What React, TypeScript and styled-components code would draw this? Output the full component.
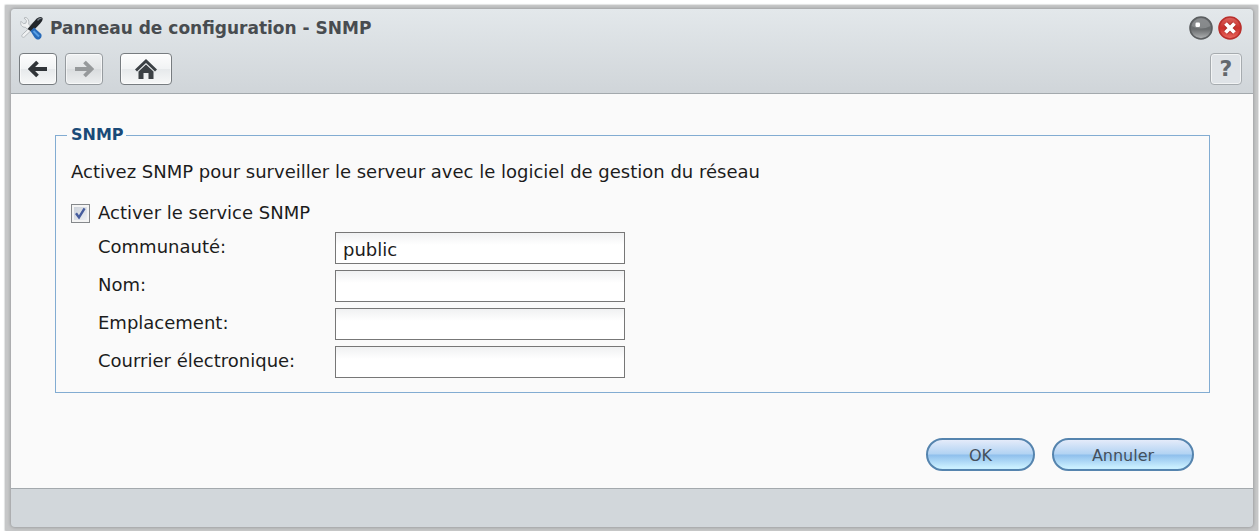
import React from "react";
import styled, { createGlobalStyle } from "styled-components";

const GlobalStyle = createGlobalStyle`
  * { box-sizing: border-box; }
  body {
    margin: 0;
    background: #fff;
    color: #1c1c1c;
    font-family: "DejaVu Sans", Verdana, sans-serif;
    font-size: 18px;
    line-height: 24px;
  }
  button, input { font: inherit; }
`;

const Page = styled.div`
  padding: 5px 1px 0 5px;
`;

const Frame = styled.div`
  padding: 4px 5px 4px 6px;
  border-radius: 1px;
  background: #c6c7c8;
  box-shadow: 0 0 1px 1px #e2e3e3;
`;

const Window = styled.section`
  display: flex;
  flex-direction: column;
  border-radius: 4px;
  background: #d2d7db;
  box-shadow: 0 0 3px 1px #9fa1a3;
`;

const Header = styled.header`
  padding: 5px 11px 8px 8px;
  border-radius: 4px 4px 0 0;
  border-bottom: 1px solid #a3a9ad;
  background: linear-gradient(#e3e8eb, #d0d5d9);
`;

const TitleBar = styled.div`
  display: flex;
  align-items: center;
  height: 28px;
  gap: 7px;
`;

const Title = styled.h1`
  flex: 1;
  margin: 0;
  color: #484c50;
  font-size: 17px;
  font-weight: bold;
  line-height: 24px;
`;

const RoundButton = styled.button`
  display: flex;
  width: 24px;
  height: 24px;
  padding: 0;
  border: 0;
  background: none;
`;

const WindowButtons = styled.div`
  display: flex;
  gap: 5px;
`;

const Toolbar = styled.nav`
  display: flex;
  gap: 8px;
  margin-top: 11px;
`;

const ToolButton = styled.button<{ $wide?: boolean; $soft?: boolean; $end?: boolean }>`
  display: flex;
  align-items: center;
  justify-content: center;
  width: ${(p) => (p.$wide ? 52 : p.$end ? 32 : 38)}px;
  height: 32px;
  margin-left: ${(p) => (p.$end ? "auto" : p.$wide ? "9px" : "0")};
  padding: 0;
  border: 1px solid ${(p) => (p.$end ? "#a6abaf" : p.$soft ? "#969b9f" : "#777c80")};
  border-radius: 4px;
  box-shadow: inset 0 0 0 1px rgba(255, 255, 255, 0.6);
  background: ${(p) =>
    p.$end
      ? "#dfe3e7"
      : p.$soft
        ? "linear-gradient(#f0f2f3, #e2e4e6 50%, #d9dcde 50%, #eceeef)"
        : "linear-gradient(#fdfdfd, #f1f3f4 50%, #e6e9eb 50%, #f7f8f8)"};
  color: #63686c;
  font-size: 22px;
  font-weight: bold;
`;

const Content = styled.main`
  padding: 31px 43px 17px 44px;
  background: #fafafa;
`;

const Group = styled.fieldset`
  min-width: 0;
  margin: 0;
  padding: 0 11px 14px;
  border: 1px solid #82acd2;
`;

const Legend = styled.legend`
  padding: 0 2px 0 4px;
  color: #1a4a78;
  font-size: 16px;
  font-weight: bold;
  line-height: 20px;
`;

const GroupBody = styled.div`
  padding: 15px 4px 0;
`;

const Intro = styled.p`
  margin: 0 0 17px;
`;

const CheckLabel = styled.label`
  display: flex;
  align-items: center;
  gap: 8px;
`;

const CheckBox = styled.input`
  appearance: none;
  width: 19px;
  height: 19px;
  margin: 0;
  border: 1px solid #85888b;
  box-shadow: inset 0 0 0 2px #f4f4f4;
  background: linear-gradient(135deg, #c6ccd6, #f2f4f6);
  &:checked {
    background:
      url("data:image/svg+xml,%3Csvg xmlns='http://www.w3.org/2000/svg' viewBox='0 0 17 17'%3E%3Cpath d='M4 8.3L7 12.4L12.6 3.4' fill='none' stroke='%23455c9d' stroke-width='2.4'/%3E%3C/svg%3E"),
      linear-gradient(135deg, #c6ccd6, #f2f4f6);
  }
`;

const Fields = styled.div`
  display: grid;
  gap: 6px;
  margin-top: 7px;
  padding-left: 27px;
`;

const Field = styled.div`
  display: grid;
  grid-template-columns: 237px minmax(0, 290px);
  align-items: center;
`;

const FieldLabel = styled.label`
  padding-bottom: 2px;
`;

const TextBox = styled.input`
  width: 100%;
  height: 32px;
  padding: 2px 7px 0;
  border: 1px solid #777;
  border-radius: 0;
  background: linear-gradient(#f0f1f2, #fff 12px);
  color: inherit;
`;

const Actions = styled.div`
  display: flex;
  justify-content: flex-end;
  gap: 17px;
  margin-top: 45px;
  padding-right: 16px;
`;

const ActionButton = styled.button<{ $wide?: boolean }>`
  width: ${(p) => (p.$wide ? 142 : 109)}px;
  height: 33px;
  padding: 2px 0 0;
  border: 2px solid #5584ae;
  border-radius: 17px;
  background: linear-gradient(#e4ebfa, #b2d3f3 48%, #8fbfec 52%, #c9efff 94%);
  color: #44505c;
  font-size: 16px;
  line-height: 20px;
`;

const Footer = styled.footer`
  height: 39px;
  border-top: 1px solid #a3a9ad;
`;

const ToolsIcon = () => (
  <svg width="24" height="24" viewBox="0 0 24 24" aria-hidden="true">
    <path
      d="M7 1.500l-2 .500 2.500 2.700-.600 2.400-2.500.600L2 5.300C.800 8.500 3 11.600 6.500 11.300l2.200 2.200-5.500 5.200c-1.300 1.500.500 3.600 2.200 2.200L18 9l-3-3-4 3.500-1.300-1.200C10.500 4.800 9 2.200 7 1.500z"
      fill="#eff1f2"
      stroke="#b4b9bd"
    />
    <path d="M8.500 13L17.500 2.700q4-3.200 6-.700.800 2-2.300 5.600L13 16z" fill="#22262b" />
    <path d="M18.500 4.500q2-2.500 4-2" stroke="#777f87" strokeWidth="1.400" fill="none" />
    <path d="M11.500 15l3.500-3.500 7.200 6.500q1.300 3.500-1.700 5.200c-2 1-4.200-.4-5.300-2.300z" fill="#286bb9" />
    <path d="M14.500 15l5.500 5.500" stroke="#5aa0e5" strokeWidth="2" />
  </svg>
);

const ArrowIcon = ({ forward }: { forward?: boolean }) => (
  <svg width="20" height="18" viewBox="0 0 20 18" aria-hidden="true">
    <path
      d={forward ? "M1 9H17M10.500 2L17.500 9L10.500 16" : "M19 9H3M9.500 2L2.500 9L9.500 16"}
      fill="none"
      stroke={forward ? "#96999b" : "#303438"}
      strokeWidth="3.800"
    />
  </svg>
);

const HomeIcon = () => (
  <svg width="24" height="22" viewBox="0 0 24 22" aria-hidden="true">
    <path d="M12 1L1 11.500l2 2L12 5l9 8.500 2-2z" fill="#3c4145" />
    <path d="M12 6.500l-7.500 7V21h5v-6h5v6h5v-7.500z" fill="#3c4145" />
  </svg>
);

const MinimizeIcon = () => (
  <svg width="24" height="24" viewBox="0 0 24 24" aria-hidden="true">
    <defs>
      <linearGradient id="ball" x1="0" y1="0" x2="0" y2="1">
        <stop offset="0" stopColor="#74777a" />
        <stop offset="0.550" stopColor="#696c6e" />
        <stop offset="1" stopColor="#b2b4b5" />
      </linearGradient>
    </defs>
    <circle cx="12" cy="12" r="11" fill="url(#ball)" stroke="#5b5e60" strokeWidth="1.600" />
    <path d="M2.500 10A9.700 9.700 0 0 1 21.500 10Q12 15 2.500 10" fill="#a6a8aa" opacity="0.450" />
    <rect x="6.500" y="6.500" width="4.500" height="4.500" rx="1.200" fill="#fff" />
  </svg>
);

const CloseIcon = () => (
  <svg width="24" height="24" viewBox="0 0 24 24" aria-hidden="true">
    <defs>
      <linearGradient id="red" x1="0" y1="0" x2="0" y2="1">
        <stop offset="0" stopColor="#dc6560" />
        <stop offset="0.500" stopColor="#c9302c" />
        <stop offset="1" stopColor="#ec6a60" />
      </linearGradient>
    </defs>
    <circle cx="12" cy="12" r="11" fill="url(#red)" stroke="#b92f2c" strokeWidth="1.600" />
    <path d="M7.500 7.500l9 9M16.500 7.500l-9 9" stroke="#8e1f1c" strokeWidth="5.400" opacity="0.500" />
    <path d="M7.500 7.500l9 9M16.500 7.500l-9 9" stroke="#fff" strokeWidth="3.800" />
  </svg>
);

const fields = [
  { id: "community", label: "Communauté:", value: "public" },
  { id: "name", label: "Nom:", value: "" },
  { id: "location", label: "Emplacement:", value: "" },
  { id: "email", label: "Courrier électronique:", value: "" },
];

export default function App() {
  return (
    <Page>
      <GlobalStyle />
      <Frame>
        <Window>
          <Header>
            <TitleBar>
              <ToolsIcon />
              <Title>Panneau de configuration - SNMP</Title>
              <WindowButtons>
                <RoundButton type="button" aria-label="Réduire"><MinimizeIcon /></RoundButton>
                <RoundButton type="button" aria-label="Fermer"><CloseIcon /></RoundButton>
              </WindowButtons>
            </TitleBar>
            <Toolbar>
              <ToolButton type="button" aria-label="Précédent"><ArrowIcon /></ToolButton>
              <ToolButton type="button" aria-label="Suivant" $soft><ArrowIcon forward /></ToolButton>
              <ToolButton type="button" aria-label="Accueil" $wide><HomeIcon /></ToolButton>
              <ToolButton type="button" $end>?</ToolButton>
            </Toolbar>
          </Header>
          <Content>
            <Group>
              <Legend>SNMP</Legend>
              <GroupBody>
                <Intro>Activez SNMP pour surveiller le serveur avec le logiciel de gestion du réseau</Intro>
                <CheckLabel>
                  <CheckBox type="checkbox" defaultChecked />
                  Activer le service SNMP
                </CheckLabel>
                <Fields>
                  {fields.map((f) => (
                    <Field key={f.id}>
                      <FieldLabel htmlFor={f.id}>{f.label}</FieldLabel>
                      <TextBox id={f.id} type="text" defaultValue={f.value} />
                    </Field>
                  ))}
                </Fields>
              </GroupBody>
            </Group>
            <Actions>
              <ActionButton type="button">OK</ActionButton>
              <ActionButton type="button" $wide>Annuler</ActionButton>
            </Actions>
          </Content>
          <Footer />
        </Window>
      </Frame>
    </Page>
  );
}
